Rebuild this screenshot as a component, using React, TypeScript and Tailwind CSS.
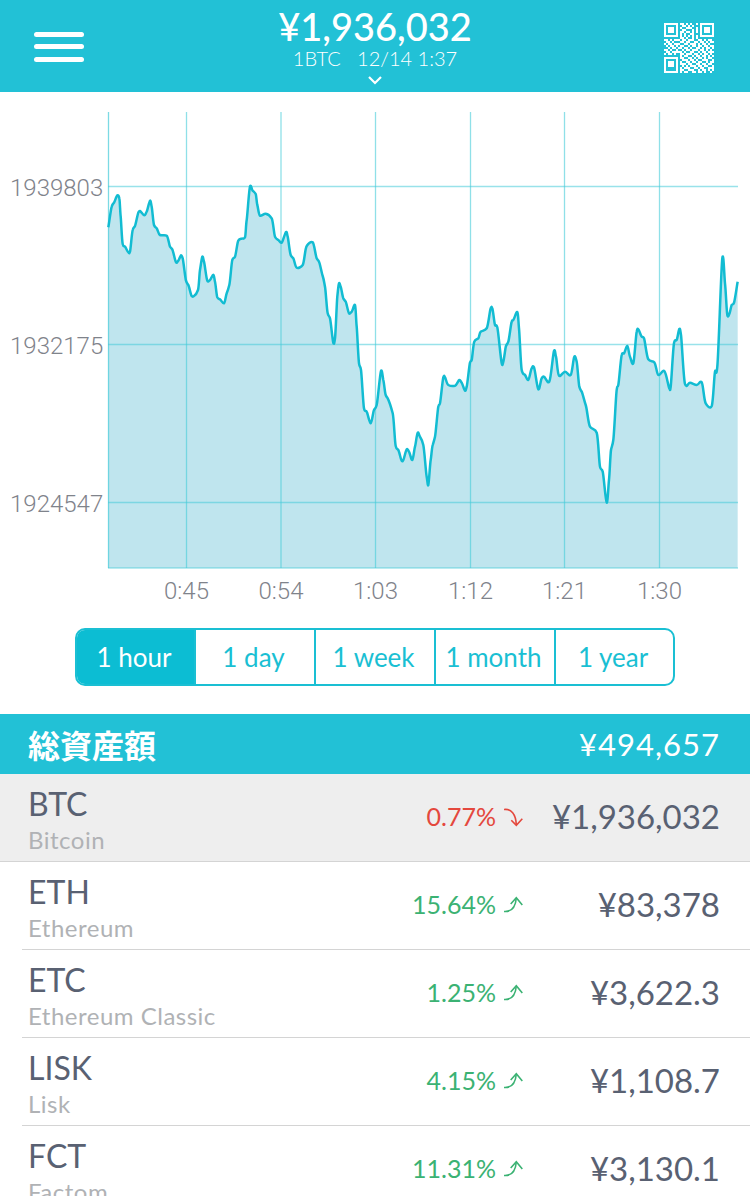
const left = [25,172,35,110,42,98,52,76,58,85,62,140,68,222,75,230,85,247,90,245,98,180,105,168,115,128,120,123,133,136,140,125,150,92,155,110,162,165,170,175,180,195,200,197,210,230,217,238,228,277,235,272,243,256,248,265,258,332,265,345,275,378,282,378,294,360,300,300,307,260,312,275,322,332,330,330,340,314,345,335,352,382,360,388,372,400,380,370,388,345,397,270,405,260,415,212,425,206,435,202,440,150,450,50,458,62,467,72,472,105,480,137,497,131,515,145,525,200,535,210,545,218,558,186,563,200,572,255,580,265,590,293,608,285,620,228,638,217,650,265,657,275,668,318,675,350,683,430,690,445,700,518,705,505,712,380,717,340,722,350,730,385,737,395,747,430,755,425,765,405,770,470,777,580,783,600,792,715,800,725,812,760,822,720,830,705,843,603,850,630,857,675,863,685,878,730,887,828,895,840,905,872,910,870,920,838,927,845,937,870,945,830,953,788,960,800,970,825,980,920];
const right = [25,735,32,660,38,615,45,590,55,500,60,490,70,412,75,412,85,435,105,437,118,420,125,428,135,452,140,440,150,368,155,360,163,305,175,295,182,275,200,265,212,205,217,205,225,255,232,262,245,370,250,365,258,318,265,305,275,245,280,240,292,216,297,265,305,390,315,405,325,420,335,385,342,382,355,448,365,415,372,410,388,425,402,333,408,350,417,407,435,395,452,405,463,350,470,365,478,440,485,455,497,495,510,560,530,578,540,680,548,695,560,788,567,720,573,630,580,600,590,450,595,435,605,345,612,340,622,318,630,350,640,370,650,275,655,268,665,290,672,295,685,358,703,367,715,405,733,393,748,445,752,440,762,310,770,300,778,267,783,285,795,432,810,428,830,435,845,427,857,490,875,498,885,395,892,380,907,55,915,130,922,225,928,222,935,195,942,188,953,125];

const points: [number, number][] = [];
for (let i = 0; i < left.length; i += 2) points.push([100 + left[i] / 3, 170 + left[i + 1] / 3]);
for (let i = 0; i < right.length; i += 2) points.push([420 + right[i] / 3, 240 + right[i + 1] / 3]);

// catmull-rom with a low tension, so peaks stay where they were read
function smooth(pts: [number, number][]) {
  let d = `M${pts[0][0].toFixed(1)} ${pts[0][1].toFixed(1)}`;
  for (let i = 0; i < pts.length - 1; i++) {
    const p0 = pts[Math.max(i - 1, 0)];
    const p1 = pts[i];
    const p2 = pts[i + 1];
    const p3 = pts[Math.min(i + 2, pts.length - 1)];
    const c1x = p1[0] + (p2[0] - p0[0]) / 6;
    const c1y = p1[1] + (p2[1] - p0[1]) / 9;
    const c2x = p2[0] - (p3[0] - p1[0]) / 6;
    const c2y = p2[1] - (p3[1] - p1[1]) / 9;
    d += `C${c1x.toFixed(1)} ${c1y.toFixed(1)} ${c2x.toFixed(1)} ${c2y.toFixed(1)} ${p2[0].toFixed(1)} ${p2[1].toFixed(1)}`;
  }
  return d;
}

const linePath = smooth(points);
const last = points[points.length - 1];
const areaPath = `${linePath}L${last[0]} 568L${points[0][0]} 568Z`;

const yTicks = [
  { y: 186.5, label: "1939803" },
  { y: 344.5, label: "1932175" },
  { y: 502.5, label: "1924547" },
];
const xTicks = [
  { x: 186.5, label: "0:45" },
  { x: 281, label: "0:54" },
  { x: 375.5, label: "1:03" },
  { x: 470.5, label: "1:12" },
  { x: 564.5, label: "1:21" },
  { x: 659.5, label: "1:30" },
];

function Chart() {
  return (
    <svg viewBox="0 92 750 536" className="block w-[750px] h-[536px]">
      <path d={areaPath} fill="#bfe5ee" />
      {yTicks.map((t) => (
        <line key={t.y} x1={108} x2={738} y1={t.y} y2={t.y} stroke="#45cbd9" strokeOpacity={0.55} strokeWidth={1.5} />
      ))}
      {xTicks.map((t) => (
        <line key={t.x} x1={t.x} x2={t.x} y1={112} y2={568} stroke="#45cbd9" strokeOpacity={0.6} strokeWidth={1.3} />
      ))}
      <line x1={108.5} x2={108.5} y1={112} y2={568} stroke="#45cbd9" strokeOpacity={0.7} strokeWidth={1.3} />
      <line x1={108} x2={738} y1={568} y2={568} stroke="#45cbd9" strokeOpacity={0.5} strokeWidth={1.3} />
      <path d={linePath} fill="none" stroke="#12bcd2" strokeWidth={2.5} strokeLinejoin="round" />
      {yTicks.map((t) => (
        <text key={t.label} x={10} y={t.y + 9} fill="#7f838b" className="font-['Roboto',sans-serif] font-light text-[24px]">
          {t.label}
        </text>
      ))}
      {xTicks.map((t) => (
        <text key={t.label} x={t.x} y={599} textAnchor="middle" fill="#7f838b" className="font-['Roboto',sans-serif] font-light text-[24px]">
          {t.label}
        </text>
      ))}
    </svg>
  );
}

const qrRows = [
  "1111111011010100101111111",
  "1000001001101010001000001",
  "1011101010011100101011101",
  "1011101001100010101011101",
  "1011101011011010101011101",
  "1000001010100110001000001",
  "1111111010101010101111111",
  "0000000011010010100000000",
  "1101011101101110011010110",
  "0110100011011001101101011",
  "1011011100110111010110100",
  "0101101011001011011011011",
  "0010110110110100110101101",
  "1101001001011011101101010",
  "0110111110100110010110111",
  "1011010011011101101011010",
  "0000000010110010110110101",
  "1111111011001101011010110",
  "1000001001110110100111001",
  "1011101010011011011001011",
  "1011101011101100110110110",
  "1011101001010111011011001",
  "1000001010111001101100111",
  "1000001011001110010110101",
  "1111111010110011011010010",
];

function QrIcon() {
  return (
    <svg viewBox="0 0 25 25" className="w-[50px] h-[50px] mt-[4px]" shapeRendering="crispEdges">
      {qrRows.flatMap((row, y) =>
        row.split("").map((c, x) => (c === "1" ? <rect key={`${x}-${y}`} x={x} y={y} width={1} height={1} fill="#fff" /> : null))
      )}
    </svg>
  );
}

function Header() {
  return (
    <header className="relative h-[92px] bg-[#22c1d6] flex items-center justify-between pl-[34px] pr-[36px] text-white">
      <div className="flex flex-col gap-[7.5px] mt-[1px]">
        <span className="block w-[50px] h-[5px] rounded-full bg-white" />
        <span className="block w-[50px] h-[5px] rounded-full bg-white" />
        <span className="block w-[50px] h-[5px] rounded-full bg-white" />
      </div>
      <div className="absolute left-0 right-0 top-[7px] flex flex-col items-center">
        <div className="font-['Lato',sans-serif] font-medium text-[38px] leading-[38px]">¥1,936,032</div>
        <div className="font-['Lato',sans-serif] font-light text-[20px] leading-[22px] mt-[2px] whitespace-pre">1BTC   12/14 1:37</div>
        <svg viewBox="0 0 16 10" className="w-[16px] h-[10px] mt-[6px]">
          <path d="M2 2l6 6 6-6" fill="none" stroke="#fff" strokeWidth={2.2} />
        </svg>
      </div>
      <QrIcon />
    </header>
  );
}

const ranges = [
  { label: "1 hour", width: "w-[117px] bg-[#0cbdd3] text-white" },
  { label: "1 day", width: "w-[120px] border-l-2 border-[#1abfd3] text-[#1abfd3]" },
  { label: "1 week", width: "w-[120px] border-l-2 border-[#1abfd3] text-[#1abfd3]" },
  { label: "1 month", width: "w-[120px] border-l-2 border-[#1abfd3] text-[#1abfd3]" },
  { label: "1 year", width: "w-[119px] border-l-2 border-[#1abfd3] text-[#1abfd3]" },
];

function RangeTabs() {
  return (
    <div className="mx-[75px] h-[58px] flex rounded-[10px] border-2 border-[#1abfd3] overflow-hidden font-['Lato',sans-serif] text-[26px]">
      {ranges.map((r) => (
        <div key={r.label} className={`${r.width} flex items-center justify-center pr-[3px]`}>
          {r.label}
        </div>
      ))}
    </div>
  );
}

function Arrow({ up }: { up: boolean }) {
  if (up) {
    return (
      <svg viewBox="0 0 19 20" className="w-[19px] h-[20px]" fill="none" stroke="#3bb273" strokeWidth={1.6}>
        <path d="M0 16.5C7 17 11.5 13 12.3 3" />
        <path d="M6.7 9L12.3 2.7L18.3 10" />
      </svg>
    );
  }
  return (
    <svg viewBox="0 0 19 20" className="w-[19px] h-[20px]" fill="none" stroke="#e4483d" strokeWidth={1.6}>
      <path d="M0 2.5C7 1.5 12 7 12.3 18" />
      <path d="M7.3 13.3L12.3 18.3L18.3 11.7" />
    </svg>
  );
}

const coins = [
  { code: "BTC", name: "Bitcoin", change: "0.77%", up: false, price: "¥1,936,032" },
  { code: "ETH", name: "Ethereum", change: "15.64%", up: true, price: "¥83,378" },
  { code: "ETC", name: "Ethereum Classic", change: "1.25%", up: true, price: "¥3,622.3" },
  { code: "LISK", name: "Lisk", change: "4.15%", up: true, price: "¥1,108.7" },
  { code: "FCT", name: "Factom", change: "11.31%", up: true, price: "¥3,130.1" },
];

function CoinRow({ coin, selected }: { coin: (typeof coins)[number]; selected: boolean }) {
  return (
    <div className={selected ? "h-[88px] bg-[#eeeeee] border-b border-[#d4d4d4]" : "h-[88px] ml-[22px] border-b border-[#d4d4d4]"}>
      <div className={selected ? "h-full flex pl-[28px] pr-[30px]" : "h-full flex pl-[6px] pr-[30px]"}>
        <div className="flex-1 pt-[10px]">
          <div className="text-[32px] leading-[40px] text-[#596172]">{coin.code}</div>
          <div className="text-[24px] leading-[28px] mt-[2px] tracking-[0.5px] text-[#b0b2b5]">{coin.name}</div>
        </div>
        <div className={`flex items-center gap-[8px] text-[25px] pb-[2px] ${coin.up ? "text-[#3bb273]" : "text-[#e4483d]"}`}>
          {coin.change}
          <Arrow up={coin.up} />
        </div>
        <div className="w-[197px] flex items-center justify-end pb-[2px] text-[33px] text-[#596172]">{coin.price}</div>
      </div>
    </div>
  );
}

export default function App() {
  return (
    <div className="w-[750px] h-[1196px] overflow-hidden bg-white font-['Lato','Noto_Sans_CJK_JP',sans-serif]">
      <Header />
      <Chart />
      <RangeTabs />
      <div className="mt-[28px] h-[60px] bg-[#22c1d6] flex items-center justify-between pl-[28px] pr-[30px] text-white">
        <span className="font-['Noto_Sans_CJK_JP',sans-serif] font-bold text-[32px]">総資産額</span>
        <span className="font-['Lato',sans-serif] text-[31px] tracking-[1px]">¥494,657</span>
      </div>
      {coins.map((c, i) => (
        <CoinRow key={c.code} coin={c} selected={i === 0} />
      ))}
    </div>
  );
}
